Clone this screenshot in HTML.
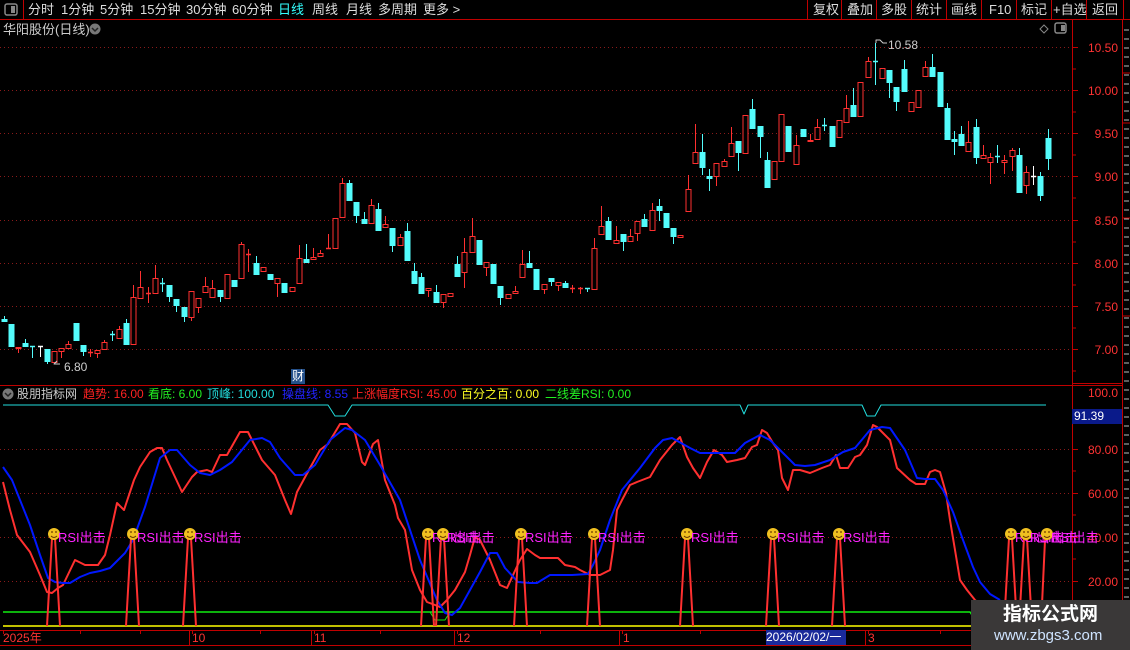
<!DOCTYPE html>
<html><head><meta charset="utf-8">
<style>
*{margin:0;padding:0;box-sizing:border-box}
body{width:1130px;height:650px;background:#000;overflow:hidden;position:relative;font-family:"Liberation Sans","Noto Sans CJK SC",sans-serif;color:#ddd}
.t{position:absolute;white-space:nowrap;font-size:13px;line-height:15px}
svg{position:absolute;left:0;top:0}
</style></head><body>
<svg id="s" width="1130" height="650" xmlns="http://www.w3.org/2000/svg"></svg>
<div class="t" style="left:28px;top:2px;color:#ddd">分时</div>
<div class="t" style="left:61px;top:2px">1分钟</div>
<div class="t" style="left:100px;top:2px">5分钟</div>
<div class="t" style="left:140px;top:2px">15分钟</div>
<div class="t" style="left:186px;top:2px">30分钟</div>
<div class="t" style="left:232px;top:2px">60分钟</div>
<div class="t" style="left:278px;top:2px;color:#3ff">日线</div>
<div class="t" style="left:312px;top:2px">周线</div>
<div class="t" style="left:346px;top:2px">月线</div>
<div class="t" style="left:378px;top:2px">多周期</div>
<div class="t" style="left:423px;top:2px">更多 &gt;</div>
<div class="t" style="left:813px;top:2px">复权</div>
<div class="t" style="left:847px;top:2px">叠加</div>
<div class="t" style="left:881px;top:2px">多股</div>
<div class="t" style="left:916px;top:2px">统计</div>
<div class="t" style="left:951px;top:2px">画线</div>
<div class="t" style="left:989px;top:2px">F10</div>
<div class="t" style="left:1021px;top:2px">标记</div>
<div class="t" style="left:1053px;top:2px">+自选</div>
<div class="t" style="left:1092px;top:2px">返回</div>
<div class="t" style="left:3px;top:22px;color:#ccc">华阳股份(日线)</div>
<div class="t" style="left:17px;top:387px;font-size:12px;color:#ccc">股朋指标网</div>
<div class="t" style="left:83px;top:387px;font-size:12px;color:#f22">趋势: 16.00</div>
<div class="t" style="left:148px;top:387px;font-size:12px;color:#2e2">看底: 6.00</div>
<div class="t" style="left:207px;top:387px;font-size:12px;color:#2dd">顶峰: 100.00</div>
<div class="t" style="left:282px;top:387px;font-size:12px;color:#22f">操盘线: 8.55</div>
<div class="t" style="left:352px;top:387px;font-size:12px;color:#f22">上涨幅度RSI: 45.00</div>
<div class="t" style="left:461px;top:387px;font-size:12px;color:#ff2">百分之百: 0.00</div>
<div class="t" style="left:545px;top:387px;font-size:12px;color:#2e2">二线差RSI: 0.00</div>
<div class="t" style="left:291px;top:369px;font-size:12px;color:#fff;background:#24508a;padding:0 1px">财</div>
<div class="t" style="left:64px;top:360px;font-size:12px;color:#ccc">6.80</div>
<div class="t" style="left:888px;top:38px;font-size:12px;color:#ccc">10.58</div>
<div class="t" style="left:3px;top:631px;font-size:12px;color:#f33">2025年</div>
<div class="t" style="left:192px;top:631px;font-size:12px;color:#f33">10</div>
<div class="t" style="left:314px;top:631px;font-size:12px;color:#f33">11</div>
<div class="t" style="left:457px;top:631px;font-size:12px;color:#f33">12</div>
<div class="t" style="left:623px;top:631px;font-size:12px;color:#f33">1</div>
<div class="t" style="left:766px;top:630px;font-size:12px;color:#fff;background:#1a2a9a;width:80px;height:15px">2026/02/02/一</div>
<div class="t" style="left:868px;top:631px;font-size:12px;color:#f33">3</div>
<div class="t" style="left:1072px;top:409px;width:50px;height:15px;font-size:12px;color:#fff;background:#0a1a8a;padding-left:2px">91.39</div>
<div style="position:absolute;left:971px;top:600px;width:159px;height:50px;background:#3a3838"></div>
<div class="t" style="left:1003px;top:604px;font-size:19px;line-height:22px;font-weight:bold;color:#fff">指标公式网</div>
<div class="t" style="left:994px;top:627px;font-size:15px;line-height:18px;color:#cfe4ff">www.zbgs3.com</div>
<script>
var s=document.getElementById('s'),h='';
function L(x1,y1,x2,y2,c,w,d){h+='<line x1="'+x1+'" y1="'+y1+'" x2="'+x2+'" y2="'+y2+'" stroke="'+c+'" stroke-width="'+(w||1)+'"'+(d?' stroke-dasharray="'+d+'"':'')+'/>';}
function P(pts,c,w){h+='<polyline fill="none" stroke="'+c+'" stroke-width="'+w+'" stroke-linejoin="round" points="'+pts+'"/>';}
var R='#c00000';
// toolbar
L(0,19.5,1130,19.5,R);L(23.5,0,23.5,19,R);
h+='<rect x="5" y="4" width="12" height="11" rx="2" fill="none" stroke="#888" stroke-width="1.5"/><rect x="11" y="6" width="4" height="7" fill="#888"/>';
[807,841,876,911,946,981,1016,1051,1086,1123].forEach(function(x){L(x+.5,0,x+.5,19,R)});
// title icons
h+='<circle cx="95" cy="29" r="5.5" fill="#777"/><path d="M92 28l3 3 3-3" stroke="#222" fill="none" stroke-width="1.5"/>';
h+='<path d="M1044 25l4 4-4 4-4-4z" fill="none" stroke="#888"/><rect x="1055" y="23" width="11" height="10" rx="2" fill="none" stroke="#888" stroke-width="1.5"/><rect x="1061" y="25" width="4" height="6" fill="#888"/>';
h+='<circle cx="8" cy="394" r="5.5" fill="#777"/><path d="M5 393l3 3 3-3" stroke="#222" fill="none" stroke-width="1.5"/>';
// axes
L(1072.5,20,1072.5,645,R);L(1122.5,20,1122.5,650,R);L(0,385.5,1122,385.5,R);L(0,630.5,1072,630.5,R);L(0,645.5,1130,645.5,R);
L(1072,383.5,1122,383.5,R);
// price grid
var py=[47,90,133,176,220,263,306,349],pl=['10.50','10.00','9.50','9.00','8.50','8.00','7.50','7.00'];
py.forEach(function(y,i){L(0,y+.5,1072,y+.5,'#8a1a1a',1,'1 3');L(1072,y+.5,1078,y+.5,R);L(1072,y+22,1076,y+22,R);
h+='<text x="1118" y="'+(y+5)+'" fill="#f33" font-size="12" text-anchor="end" font-family="Liberation Sans">'+pl[i]+'</text>';});
var iy=[[449,'80.00'],[493,'60.00'],[537,'40.00'],[581,'20.00']];
iy.forEach(function(a){L(0,a[0]+.5,1072,a[0]+.5,'#8a1a1a',1,'1 3');L(1072,a[0]+.5,1078,a[0]+.5,R);L(1072,a[0]+22,1076,a[0]+22,R);
h+='<text x="1118" y="'+(a[0]+5)+'" fill="#f33" font-size="12" text-anchor="end" font-family="Liberation Sans">'+a[1]+'</text>';});
h+='<text x="1118" y="397" fill="#f33" font-size="12" text-anchor="end" font-family="Liberation Sans">100.0</text>';
// right strip
for(var y=30;y<630;y+=9){L(1124,y,1129,y,'#bbb',1)}
[73,123,218,316].forEach(function(y){L(1122,y,1130,y,R)});
// time axis ticks
[3,80,140,192,260,314,380,457,540,622,700,766,845,868,940,1010].forEach(function(x){L(x+.5,630,x+.5,634,R)});
[192,314,457,622,868].forEach(function(x){L(x-2.5,630,x-2.5,645,R)});
// candles [top,bot,hi,lo,type]
var C=[[319,322,316,322,'c'],[324,347,0,0,'c'],[347,349,0,353,'r'],[343,347,339,0,'c'],[346,347,346,358,'c'],[346,347,346,357,'w'],[349,362,0,364,'c'],[351,363,0,0,'r'],[348,352,0,358,'r'],[344,349,341,0,'r'],
[323,341,0,0,'c'],[345,352,0,356,'c'],[352,353,349,357,'r'],[350,354,0,358,'r'],[342,350,340,0,'r'],[334,335,331,341,'c'],[329,339,326,0,'r'],[323,345,319,0,'c'],[297,345,285,0,'r'],[287,299,271,0,'r'],
[293,294,287,303,'r'],[278,294,265,0,'r'],[283,284,278,292,'c'],[285,297,0,302,'c'],[299,306,0,312,'c'],[307,317,0,322,'c'],[291,318,0,321,'r'],[298,308,0,313,'r'],[286,293,277,0,'r'],[288,298,280,0,'r'],
[290,297,0,302,'c'],[274,299,0,0,'r'],[280,287,0,0,'c'],[244,279,242,0,'r'],[254,255,249,272,'r'],[263,275,256,0,'c'],[267,272,0,0,'r'],[274,280,0,0,'c'],[278,284,0,297,'r'],[283,293,0,0,'c'],
[287,292,0,0,'r'],[258,284,245,0,'r'],[259,263,244,0,'c'],[257,260,248,0,'r'],[253,257,250,0,'r'],[248,249,234,0,'r'],[218,249,0,0,'r'],[183,218,178,0,'r'],[183,201,180,0,'c'],[202,216,0,223,'c'],
[219,224,212,0,'c'],[205,224,199,0,'r'],[209,231,203,0,'c'],[224,228,216,0,'r'],[228,246,0,252,'c'],[237,246,234,0,'r'],[231,261,223,0,'c'],[271,284,263,0,'c'],[277,294,273,0,'c'],[288,291,0,297,'r'],
[292,303,285,0,'c'],[294,303,0,308,'r'],[293,297,0,0,'r'],[264,277,256,0,'c'],[252,273,238,288,'r'],[236,253,218,0,'r'],[240,265,0,0,'c'],[262,268,0,276,'r'],[264,284,0,0,'c'],[286,298,0,305,'c'],
[294,299,0,0,'r'],[291,294,286,0,'r'],[264,278,250,0,'r'],[263,268,251,0,'c'],[269,290,0,0,'c'],[284,290,0,294,'r'],[278,282,0,286,'c'],[282,286,0,291,'r'],[283,288,281,0,'c'],[288,289,285,293,'r'],
[288,289,287,294,'r'],[288,289,0,292,'c'],[248,290,238,0,'r'],[226,235,206,0,'r'],[221,240,217,0,'c'],[240,244,226,0,'r'],[234,242,0,251,'c'],[236,242,229,0,'r'],[221,234,0,241,'r'],[219,227,214,0,'c'],
[210,231,203,0,'r'],[206,211,199,221,'c'],[213,228,0,0,'c'],[228,237,0,244,'c'],[235,238,0,0,'r'],[189,212,175,0,'r'],[152,164,124,0,'r'],[152,168,134,175,'c'],[176,179,169,191,'c'],[163,177,0,186,'r'],
[161,167,159,0,'r'],[143,157,127,0,'r'],[141,153,0,171,'c'],[115,154,0,0,'r'],[109,129,99,0,'c'],[126,137,0,158,'c'],[160,188,152,0,'c'],[161,180,0,0,'r'],[114,162,0,0,'r'],[126,152,0,0,'c'],
[145,165,135,0,'r'],[129,137,0,0,'c'],[140,142,134,0,'r'],[127,140,119,0,'r'],[125,126,118,131,'c'],[126,147,0,0,'c'],[120,138,0,0,'r'],[108,123,95,0,'r'],[105,117,88,0,'c'],[82,117,0,0,'r'],
[61,78,57,0,'r'],[61,62,43,85,'c'],[68,79,0,0,'r'],[70,83,0,98,'c'],[87,102,0,111,'c'],[69,92,60,0,'c'],[102,112,0,0,'r'],[90,108,0,0,'r'],[67,77,61,0,'r'],[67,77,54,0,'c'],
[72,107,0,0,'c'],[108,140,103,0,'c'],[139,142,131,155,'c'],[134,146,126,0,'c'],[142,152,121,0,'r'],[127,158,119,164,'c'],[155,159,145,0,'r'],[157,163,153,184,'r'],[156,157,145,163,'c'],[160,163,155,174,'r'],
[150,157,148,171,'r'],[155,193,148,0,'c'],[172,186,166,194,'r'],[176,177,166,185,'w'],[176,196,172,201,'c'],[138,159,129,170,'c']];
var CY='#54fcfc',RD='#ff3030';
C.forEach(function(c,i){var x=3.5+i*7.2,col=c[4]=='r'?RD:(c[4]=='c'?CY:'#fff');var hi=c[2]||c[0],lo=c[3]||c[1];
x=Math.round(x)+.5;
if(hi<c[0])L(x,hi,x,c[0],col);if(lo>c[1])L(x,c[1],x,lo,col);
if(c[1]-c[0]<=1.5){L(x-2.5,c[0]+.5,x+2.5,c[0]+.5,col,1.5);}
else if(c[4]=='r')h+='<rect x="'+(x-2.5)+'" y="'+(c[0]+.5)+'" width="5" height="'+(c[1]-c[0]-1)+'" fill="#000" stroke="'+col+'"/>';
else h+='<rect x="'+(x-3)+'" y="'+c[0]+'" width="6" height="'+(c[1]-c[0])+'" fill="'+col+'"/>';});
// low/high markers
P('60,364 54,364 57,361','#ccc',1);P('876,43 876,40 880,40 883,43 887,43','#ccc',1);
// indicator: cyan top
P('3,405 328,405 335,416 345,416 352,405 740,405 744,414 748,405 862,405 867,416 875,416 881,405 1046,405','#2dd',1);
// green & yellow
P('3,612 970,612 975,620','#1e1',1.5);L(3,626,1072,626,'#ff0',1.5);P('430,612 435,620 445,620 450,612','#1e1',1);
// red line
P('3,482 10,510 17,535 30,552 40,575 47,592 52,593 58,588 63,585 75,560 85,565 98,565 105,555 110,535 117,503 124,510 134,480 140,467 150,452 157,448 162,448 167,460 175,477 182,492 192,477 197,472 207,470 212,472 220,455 227,455 240,432 248,432 255,446 262,460 275,475 285,500 291,514 297,492 310,468 320,450 328,444 340,424 347,424 355,433 362,462 365,465 373,444 378,440 385,480 395,505 398,518 405,530 412,570 420,590 427,602 435,605 440,607 447,600 455,590 465,572 470,555 475,537 480,540 490,560 500,585 507,588 520,560 527,549 535,555 540,558 558,558 565,565 575,567 580,570 590,575 600,575 610,570 613,550 617,510 622,500 630,485 637,482 650,477 660,460 672,445 680,437 687,457 693,468 700,478 707,462 714,450 722,455 727,462 737,460 745,458 752,447 757,445 762,430 767,433 773,443 778,450 782,478 788,490 793,470 800,470 810,473 822,468 830,465 836,455 840,468 848,468 855,457 860,455 867,445 873,425 877,427 880,430 890,440 897,468 910,480 916,484 925,484 930,472 935,470 940,472 946,493 950,520 955,550 960,580 967,590 975,600 990,612 998,617 1003,617 1010,612 1017,608 1021,607 1030,605 1040,603 1043,600',RD,2);
// blue line
P('3,467 12,480 20,500 30,525 40,555 48,578 55,582 63,583 70,583 80,577 90,573 100,571 110,568 118,560 125,553 133,540 145,507 160,458 170,450 177,450 190,465 200,473 210,475 220,470 232,462 250,440 262,438 270,442 280,458 295,475 303,475 315,465 330,440 345,428 352,430 365,440 380,465 400,500 420,560 437,600 445,613 452,615 460,608 470,590 480,572 490,553 497,553 505,568 518,582 530,583 537,583 550,575 560,575 572,575 588,574 593,565 600,550 610,520 622,490 640,468 655,448 663,440 672,438 690,448 700,453 735,453 745,443 760,435 770,440 785,455 795,465 805,466 815,465 830,460 843,452 855,448 870,430 882,427 890,428 905,450 917,478 925,479 935,479 943,490 953,512 963,540 973,567 980,582 990,594 1000,600','#0018ff',2);
// spikes & smileys
var sp=[54,133,190,428,443,521,594,687,773,839,1011,1026];
sp.forEach(function(x){P((x-7)+',626 '+(x-2)+',538 '+(x+1)+',538 '+(x+6)+',626',RD,2);});
P('1041,626 1045,540 1047,537',RD,2);
sp.concat([1047]).forEach(function(x,i){
h+='<circle cx="'+x+'" cy="534" r="6" fill="#f0c020"/><circle cx="'+(x-2)+'" cy="532" r=".9" fill="#630"/><circle cx="'+(x+2)+'" cy="532" r=".9" fill="#630"/><path d="M'+(x-3)+' 536q3 3 6 0" stroke="#630" fill="none"/>';
h+='<text x="'+(x+4)+'" y="542" fill="#f2f" font-size="13" font-family="Liberation Sans,Noto Sans CJK SC,sans-serif">RSI出击</text>';});
s.innerHTML=h;
</script>
</body></html>
